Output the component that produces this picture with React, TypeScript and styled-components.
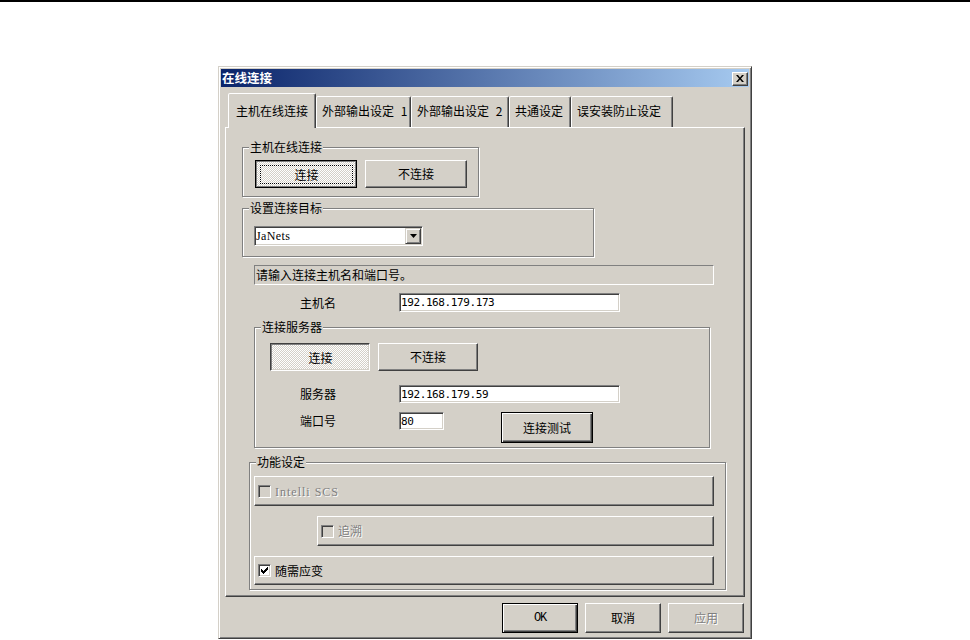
import styled, { createGlobalStyle, css } from "styled-components";

const FACE = "#d4d0c8";
const LIGHT = "#ffffff";
const SHADOW = "#808080";
const DARK = "#404040";

const GlobalStyle = createGlobalStyle`
  * { box-sizing: border-box; }
  html, body { margin: 0; padding: 0; background: #ffffff; }
  body {
    font-family: "Noto Sans CJK SC", "Noto Sans", sans-serif;
    font-size: 12px;
    color: #000;
    overflow: hidden;
  }
`;

// classic 3D edges
const raised = css`
  border: 1px solid;
  border-color: ${LIGHT} ${DARK} ${DARK} ${LIGHT};
  box-shadow: inset -1px -1px 0 ${SHADOW};
`;

const sunken = css`
  border: 1px solid;
  border-color: ${SHADOW} ${LIGHT} ${LIGHT} ${SHADOW};
  box-shadow: inset 1px 1px 0 ${DARK}, inset -1px -1px 0 ${FACE};
`;

const dither = css`
  background: repeating-conic-gradient(${LIGHT} 0 25%, ${FACE} 0 50%) 0 0 / 2px 2px;
`;

const disabledText = css`
  color: ${SHADOW};
  text-shadow: 1px 1px 0 ${LIGHT};
`;

const TopRule = styled.div`
  height: 2px;
  background: #000;
`;

const Window = styled.div`
  margin: 64px 0 0 218px;
  width: 534px;
  height: 573px;
  padding: 2px;
  display: flex;
  flex-direction: column;
  background: ${FACE};
  border: 1px solid;
  border-color: ${FACE} ${DARK} ${DARK} ${FACE};
  box-shadow: inset 1px 1px 0 ${LIGHT}, inset -1px -1px 0 ${SHADOW};
`;

const TitleBar = styled.div`
  height: 18px;
  display: flex;
  align-items: center;
  justify-content: space-between;
  padding: 0 1px 0 1px;
  background: linear-gradient(to right, #0a246a, #a6caf0);
`;

const Title = styled.span`
  color: #fff;
  font-weight: bold;
  font-size: 12.5px;
  line-height: 14px;
`;

const CloseButton = styled.button`
  width: 16px;
  height: 14px;
  margin: 1px 0 0 0;
  padding: 0;
  display: flex;
  align-items: center;
  justify-content: center;
  background: ${FACE};
  ${raised}
`;

const Body = styled.div`
  flex: 1;
  display: flex;
  flex-direction: column;
  padding: 6px 4px 0;
`;

const TabStrip = styled.div`
  height: 35px;
  margin-bottom: -1px;
  padding-left: 3px;
  display: flex;
  align-items: flex-end;
  position: relative;
  z-index: 1;
`;

const Tab = styled.div<{ $active?: boolean; $w: number }>`
  width: ${(p) => p.$w}px;
  height: ${(p) => (p.$active ? 35 : 31)}px;
  margin-bottom: ${(p) => (p.$active ? 0 : 1)}px;
  padding: ${(p) => (p.$active ? "10px 0 0 7px" : "7px 0 0 5px")};
  background: ${FACE};
  border: 1px solid;
  border-bottom: none;
  border-color: ${LIGHT} ${DARK} transparent ${LIGHT};
  border-radius: 2px 2px 0 0;
  box-shadow: inset -1px 0 0 ${SHADOW};
  line-height: 14px;
  word-spacing: 4px;
  white-space: nowrap;
`;

const TabPanel = styled.div`
  height: 470px;
  display: flex;
  flex-direction: column;
  align-items: flex-start;
  border: 1px solid;
  border-color: ${LIGHT} ${DARK} ${DARK} ${LIGHT};
  box-shadow: inset -1px -1px 0 ${SHADOW};
`;

const GroupBox = styled.div<{ $mt: number; $ml: number; $w: number; $h: number }>`
  width: ${(p) => p.$w}px;
  height: ${(p) => p.$h}px;
  margin: ${(p) => p.$mt}px 0 0 ${(p) => p.$ml}px;
  display: flex;
  flex-direction: column;
  align-items: flex-start;
  flex-shrink: 0;
  border: 1px solid ${SHADOW};
  box-shadow: 1px 1px 0 ${LIGHT}, inset 1px 1px 0 ${LIGHT};
`;

const Caption = styled.div`
  height: 13px;
  margin: -8px 0 -5px 6px;
  padding: 0 1px;
  line-height: 13px;
  background: ${FACE};
  white-space: nowrap;
`;

const ButtonRow = styled.div<{ $mt: number; $ml: number; $gap: number }>`
  display: flex;
  gap: ${(p) => p.$gap}px;
  margin: ${(p) => p.$mt}px 0 0 ${(p) => p.$ml}px;
`;

type Look = "normal" | "default" | "checked" | "checkedFocus" | "disabled";

const looks = {
  normal: raised,
  disabled: css`
    ${raised}
    ${disabledText}
  `,
  default: css`
    border: 1px solid #000;
    box-shadow: inset 1px 1px 0 ${LIGHT}, inset -1px -1px 0 ${DARK}, inset -2px -2px 0 ${SHADOW};
  `,
  checked: css`
    border: 1px solid;
    border-color: ${DARK} ${LIGHT} ${LIGHT} ${DARK};
    box-shadow: inset 1px 1px 0 ${SHADOW}, inset -1px -1px 0 ${FACE};
    ${dither}
    padding: 1px 0 0 1px;
  `,
  checkedFocus: css`
    border: 1px solid #000;
    box-shadow: inset 0 0 0 1px ${SHADOW};
    ${dither}
    padding: 1px 0 0 1px;
  `,
};

const PushButton = styled.button<{ $w: number; $h: number; $look?: Look; $ml?: number }>`
  width: ${(p) => p.$w}px;
  height: ${(p) => p.$h}px;
  margin: 0 0 0 ${(p) => p.$ml ?? 0}px;
  padding: 0;
  flex-shrink: 0;
  display: flex;
  align-items: center;
  justify-content: center;
  font: inherit;
  line-height: 14px;
  color: #000;
  background: ${FACE};
  ${(p) => looks[p.$look ?? "normal"]}
`;

const FocusRing = styled.span`
  flex: 1;
  align-self: stretch;
  margin: 3px;
  display: flex;
  align-items: center;
  justify-content: center;
  border: 1px dotted #000;
`;

// half-width latin text of the old bitmap font
const Latin = styled.span`
  font-family: "Liberation Serif", "Times New Roman", serif;
  font-size: 12px;
  letter-spacing: 1px;
`;

const Combo = styled.div`
  width: 169px;
  height: 20px;
  margin: 17px 0 0 11px;
  display: flex;
  align-items: center;
  background: #fff;
  ${sunken}
`;

const ComboText = styled(Latin)`
  flex: 1;
  padding-left: 1px;
  letter-spacing: 0.4px;
`;

const DropButton = styled.span`
  width: 16px;
  height: 16px;
  margin-right: 1px;
  display: flex;
  align-items: center;
  justify-content: center;
  background: ${FACE};
  border: 1px solid;
  border-color: ${FACE} ${DARK} ${DARK} ${FACE};
  box-shadow: inset 1px 1px 0 ${LIGHT}, inset -1px -1px 0 ${SHADOW};
`;

const StaticBox = styled.div`
  width: 460px;
  height: 20px;
  margin: 8px 0 0 28px;
  padding-left: 1px;
  line-height: 18px;
  border: 1px solid;
  border-color: ${SHADOW} ${LIGHT} ${LIGHT} ${SHADOW};
`;

const FieldRow = styled.div<{ $mt: number; $ml: number }>`
  display: flex;
  align-items: flex-start;
  margin: ${(p) => p.$mt}px 0 0 ${(p) => p.$ml}px;
`;

const FieldLabel = styled.span<{ $h: number }>`
  width: 99px;
  height: ${(p) => p.$h}px;
  line-height: ${(p) => p.$h}px;
  flex-shrink: 0;
`;

const TextField = styled.input<{ $w: number; $h: number }>`
  width: ${(p) => p.$w}px;
  height: ${(p) => p.$h}px;
  margin: 0;
  padding: 0 0 0 1px;
  flex-shrink: 0;
  font-family: "DejaVu Sans Mono", monospace;
  font-size: 11px;
  letter-spacing: -0.4px;
  color: #000;
  background: #fff;
  outline: none;
  ${sunken}
`;

const CheckPanel = styled.div<{ $mt: number; $ml: number; $w: number; $h: number }>`
  width: ${(p) => p.$w}px;
  height: ${(p) => p.$h}px;
  margin: ${(p) => p.$mt}px 0 0 ${(p) => p.$ml}px;
  padding-left: 3px;
  display: flex;
  align-items: center;
  gap: 4px;
  flex-shrink: 0;
  ${raised}
`;

const CheckBox = styled.span<{ $disabled?: boolean }>`
  width: 13px;
  height: 13px;
  display: flex;
  align-items: center;
  justify-content: center;
  background: ${(p) => (p.$disabled ? FACE : "#fff")};
  ${sunken}
`;

const CheckLabel = styled.span<{ $disabled?: boolean }>`
  line-height: 14px;
  ${(p) => p.$disabled && disabledText}
`;

const DialogButtons = styled.div`
  display: flex;
  justify-content: flex-end;
  gap: 7px;
  margin-top: 6px;
  padding-right: 1px;
`;

const OkText = styled.span`
  font-family: "Liberation Mono", "Courier New", monospace;
  font-size: 12px;
  letter-spacing: -1.2px;
`;

const tabs = [
  { label: "主机在线连接", w: 88, active: true },
  { label: "外部输出设定 1", w: 95 },
  { label: "外部输出设定 2", w: 98 },
  { label: "共通设定", w: 62 },
  { label: "误安装防止设定", w: 102 },
];

function CloseGlyph() {
  return (
    <svg width="8" height="7" viewBox="0 0 8 7">
      <path d="M0 0h2l2 2.4L6 0h2L5 3.5 8 7H6L4 4.6 2 7H0l3-3.5z" fill="#000" />
    </svg>
  );
}

function DownArrow() {
  return (
    <svg width="7" height="4" viewBox="0 0 7 4">
      <path d="M0 0h7L3.5 4z" fill="#000" />
    </svg>
  );
}

function CheckMark() {
  return (
    <svg width="7" height="7" viewBox="0 0 7 7" shapeRendering="crispEdges">
      <path d="M0 2h1v1h1v1h1V3h1V2h1V1h1V0h1v3H6v1H5v1H4v1H3v1H2V6H1V5H0z" fill="#000" />
    </svg>
  );
}

export default function App() {
  return (
    <>
      <GlobalStyle />
      <TopRule />
      <Window>
        <TitleBar>
          <Title>在线连接</Title>
          <CloseButton aria-label="关闭">
            <CloseGlyph />
          </CloseButton>
        </TitleBar>
        <Body>
          <TabStrip>
            {tabs.map((t) => (
              <Tab key={t.label} $w={t.w} $active={t.active}>
                {t.label}
              </Tab>
            ))}
          </TabStrip>
          <TabPanel>
            <GroupBox $mt={19} $ml={16} $w={237} $h={50}>
              <Caption>主机在线连接</Caption>
              <ButtonRow $mt={12} $ml={12} $gap={8}>
                <PushButton $w={102} $h={28} $look="checkedFocus">
                  <FocusRing>连接</FocusRing>
                </PushButton>
                <PushButton $w={102} $h={28}>不连接</PushButton>
              </ButtonRow>
            </GroupBox>

            <GroupBox $mt={11} $ml={16} $w={352} $h={49}>
              <Caption>设置连接目标</Caption>
              <Combo>
                <ComboText>JaNets</ComboText>
                <DropButton>
                  <DownArrow />
                </DropButton>
              </Combo>
            </GroupBox>

            <StaticBox>请输入连接主机名和端口号。</StaticBox>

            <FieldRow $mt={8} $ml={74}>
              <FieldLabel $h={19}>主机名</FieldLabel>
              <TextField $w={221} $h={19} readOnly value="192.168.179.173" />
            </FieldRow>

            <GroupBox $mt={15} $ml={28} $w={456} $h={121}>
              <Caption>连接服务器</Caption>
              <ButtonRow $mt={15} $ml={15} $gap={8}>
                <PushButton $w={100} $h={28} $look="checked">连接</PushButton>
                <PushButton $w={100} $h={28}>不连接</PushButton>
              </ButtonRow>
              <FieldRow $mt={14} $ml={45}>
                <FieldLabel $h={18}>服务器</FieldLabel>
                <TextField $w={221} $h={18} readOnly value="192.168.179.59" />
              </FieldRow>
              <FieldRow $mt={9} $ml={45}>
                <FieldLabel $h={18}>端口号</FieldLabel>
                <TextField $w={45} $h={18} readOnly value="80" />
                <PushButton $w={92} $h={31} $look="default" $ml={57}>
                  连接测试
                </PushButton>
              </FieldRow>
            </GroupBox>

            <GroupBox $mt={14} $ml={23} $w={477} $h={128}>
              <Caption>功能设定</Caption>
              <CheckPanel $mt={13} $ml={4} $w={460} $h={30}>
                <CheckBox $disabled />
                <CheckLabel $disabled>
                  <Latin>Intelli SCS</Latin>
                </CheckLabel>
              </CheckPanel>
              <CheckPanel $mt={10} $ml={67} $w={397} $h={30}>
                <CheckBox $disabled />
                <CheckLabel $disabled>追溯</CheckLabel>
              </CheckPanel>
              <CheckPanel $mt={10} $ml={4} $w={460} $h={29}>
                <CheckBox>
                  <CheckMark />
                </CheckBox>
                <CheckLabel>随需应变</CheckLabel>
              </CheckPanel>
            </GroupBox>
          </TabPanel>

          <DialogButtons>
            <PushButton $w={76} $h={30} $look="default">
              <OkText>OK</OkText>
            </PushButton>
            <PushButton $w={76} $h={30}>取消</PushButton>
            <PushButton $w={76} $h={30} $look="disabled">应用</PushButton>
          </DialogButtons>
        </Body>
      </Window>
    </>
  );
}
